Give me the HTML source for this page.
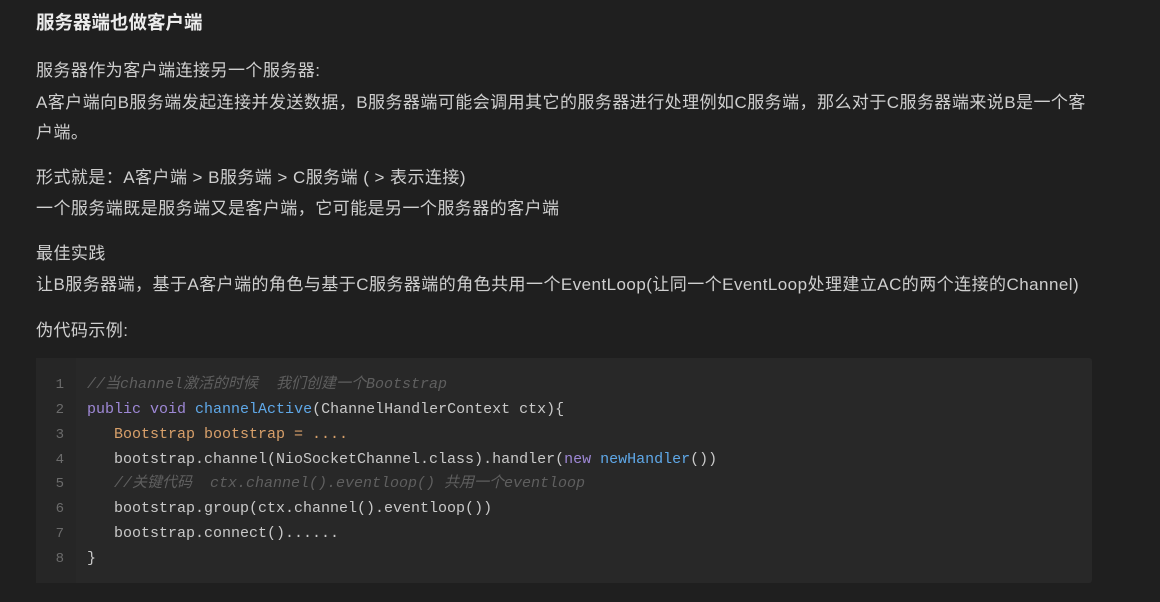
<!DOCTYPE html>
<html><head><meta charset="utf-8"><style>
html,body{margin:0;padding:0;background:#1f1f1f;width:1160px;height:602px;overflow:hidden}
body{font-family:"Liberation Sans","Noto Sans CJK SC",sans-serif;color:#cfcfcf;font-size:17px;letter-spacing:0.45px}
.t{position:absolute;left:36px;white-space:nowrap;line-height:20px}
h1{position:absolute;left:36px;top:11px;margin:0;font-size:18.5px;line-height:24px;font-weight:bold;color:#ececec;white-space:nowrap;letter-spacing:0}
.code{position:absolute;left:36px;top:358px;width:1056px;height:225px;background:#282828;border-radius:3px;letter-spacing:0}
.gut{position:absolute;left:0;top:0;width:40px;height:225px;background:#262626}
.ln{position:absolute;left:0;width:28px;text-align:right;color:#6b6b6b;font-family:"Liberation Mono",monospace;font-size:14px;line-height:20px}
.cl{position:absolute;left:51px;white-space:pre;font-family:"Liberation Mono","Noto Sans CJK SC",monospace;font-size:15px;line-height:20px;color:#c9c9c9}
.cm{color:#5f5f5f;font-style:italic}
.kw{color:#9e88d6}
.fn{color:#5fa8e8}
.or{color:#d8a06a}
</style></head><body>
<h1>服务器端也做客户端</h1>
<div class="t" style="top:61px">服务器作为客户端连接另一个服务器:</div>
<div class="t" style="top:93px">A客户端向B服务端发起连接并发送数据，B服务器端可能会调用其它的服务器进行处理例如C服务端，那么对于C服务器端来说B是一个客</div>
<div class="t" style="top:123px">户端。</div>
<div class="t" style="top:168px">形式就是：A客户端 &gt; B服务端 &gt; C服务端 ( &gt; 表示连接)</div>
<div class="t" style="top:199px">一个服务端既是服务端又是客户端，它可能是另一个服务器的客户端</div>
<div class="t" style="top:244px">最佳实践</div>
<div class="t" style="top:275px">让B服务器端，基于A客户端的角色与基于C服务器端的角色共用一个EventLoop(让同一个EventLoop处理建立AC的两个连接的Channel)</div>
<div class="t" style="top:321px">伪代码示例:</div>
<div class="code"><div class="gut"></div>
<div class="ln" style="top:17px">1</div><div class="ln" style="top:42px">2</div><div class="ln" style="top:67px">3</div><div class="ln" style="top:92px">4</div><div class="ln" style="top:116px">5</div><div class="ln" style="top:141px">6</div><div class="ln" style="top:166px">7</div><div class="ln" style="top:191px">8</div>
<div class="cl cm" style="top:17px">//当channel激活的时候  我们创建一个Bootstrap</div>
<div class="cl" style="top:42px"><span class="kw">public void</span> <span class="fn">channelActive</span>(ChannelHandlerContext ctx){</div>
<div class="cl" style="top:67px">   <span class="or">Bootstrap bootstrap = ....</span></div>
<div class="cl" style="top:92px">   bootstrap.channel(NioSocketChannel.class).handler(<span class="kw">new</span> <span class="fn">newHandler</span>())</div>
<div class="cl cm" style="top:116px">   //关键代码  ctx.channel().eventloop() 共用一个eventloop</div>
<div class="cl" style="top:141px">   bootstrap.group(ctx.channel().eventloop())</div>
<div class="cl" style="top:166px">   bootstrap.connect()......</div>
<div class="cl" style="top:191px">}</div>
</div>
</body></html>
